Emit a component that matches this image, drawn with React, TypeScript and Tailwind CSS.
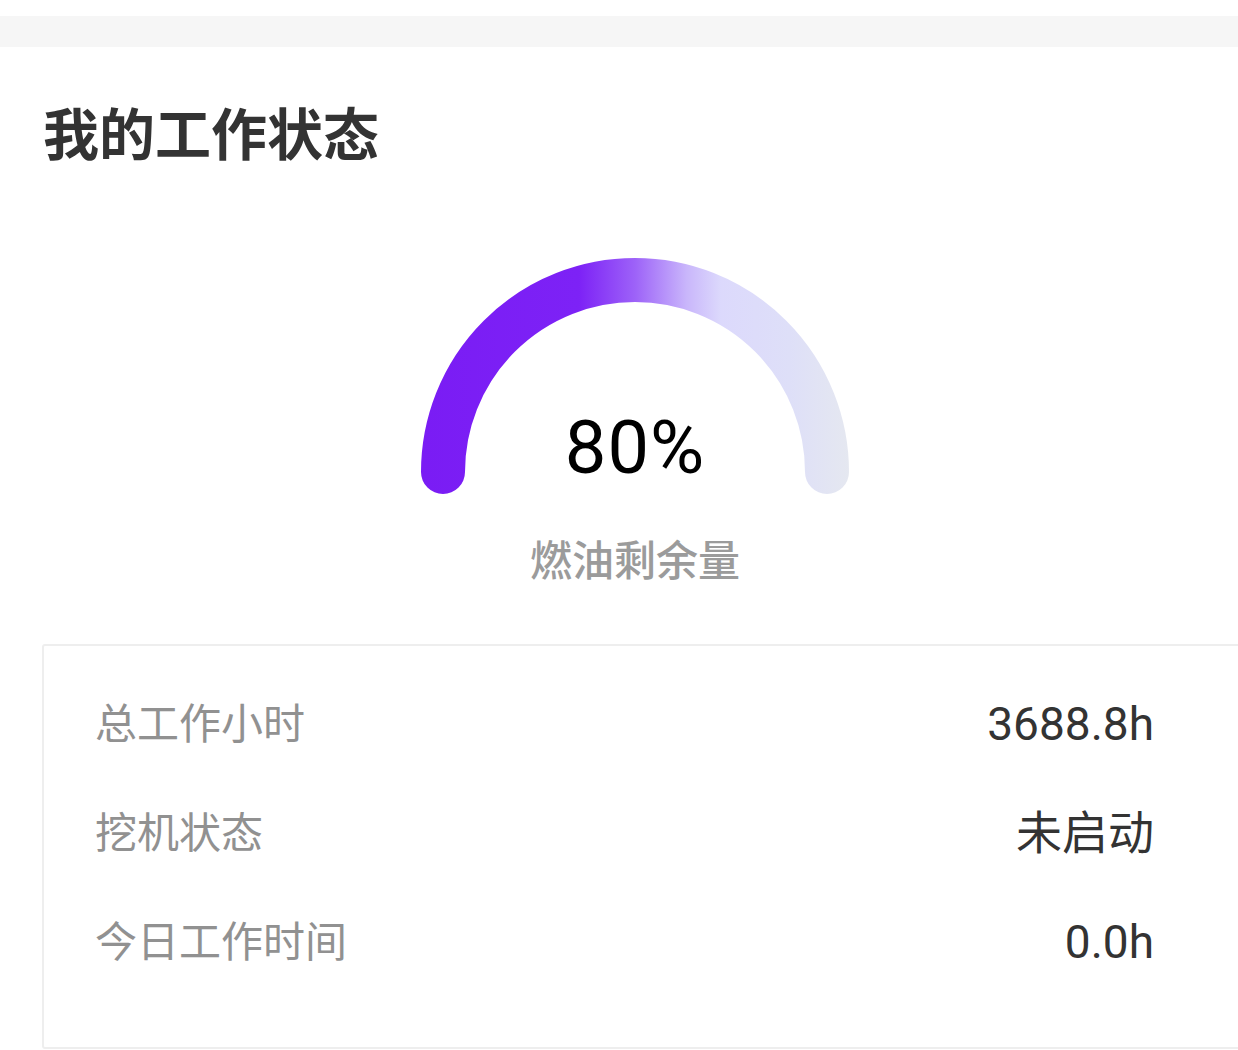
const rows = [
  { label: '总工作小时', value: '3688.8h' },
  { label: '挖机状态', value: '未启动' },
  { label: '今日工作时间', value: '0.0h' },
]

function FuelGauge() {
  // semicircle, centre (215, 214) in a 430 x 240 box
  return (
    <svg width="430" height="240" viewBox="0 0 430 240" className="block">
      <defs>
        <linearGradient id="fuel" x1="0" y1="0" x2="430" y2="0" gradientUnits="userSpaceOnUse">
          <stop offset="0" stopColor="#7a1cf4" />
          <stop offset="0.37" stopColor="#7d22f6" />
          <stop offset="0.5" stopColor="#9d62f8" />
          <stop offset="0.62" stopColor="#c9b6fb" />
          <stop offset="0.7" stopColor="#dcd9fc" />
          <stop offset="0.86" stopColor="#dedff8" />
          <stop offset="1" stopColor="#e5e8f0" />
        </linearGradient>
      </defs>
      <path
        d="M 23 214 A 192 192 0 0 1 407 214"
        fill="none"
        stroke="url(#fuel)"
        strokeWidth="44"
        strokeLinecap="round"
      />
    </svg>
  )
}

export default function App() {
  return (
    <div
      className="w-[1238px] h-[1050px] overflow-hidden bg-white"
      style={{ fontFamily: 'Roboto, "Noto Sans CJK SC", sans-serif' }}
    >
      <div className="h-[16px]" />
      <div className="h-[31px] bg-[#f6f6f6]" />

      <h1 className="ml-[43px] mt-[54px] text-[56px] leading-[70px] font-bold text-[#333333]">
        我的工作状态
      </h1>

      <div className="mt-[87px] ml-[32px] flex flex-col items-center">
        <div className="relative">
          <FuelGauge />
          <div className="absolute left-0 right-0 top-[150px] text-center text-[74px] leading-[80px] tracking-[1px] text-black">
            80%
          </div>
        </div>
        <div className="mt-[39px] text-[42px] leading-[50px] font-medium text-[#9b9b9b]">
          燃油剩余量
        </div>
      </div>

      <div className="mt-[57px] ml-[42px] w-[1210px] border-2 border-[#eeeeee] rounded-[3px] pt-[24px] pl-[51px] pr-[96px] pb-[50px]">
        {rows.map((r) => (
          <div key={r.label} className="h-[109px] flex items-center justify-between">
            <span className="text-[42px] text-[#919191]">{r.label}</span>
            <span className="text-[46px] text-[#333333]">{r.value}</span>
          </div>
        ))}
      </div>
    </div>
  )
}
